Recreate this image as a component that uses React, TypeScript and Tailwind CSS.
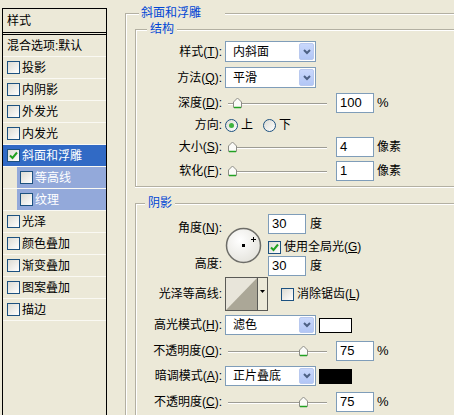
import React from 'react'

const Check = () => (
  <svg width="9" height="9" viewBox="0 0 9 9">
    <path d="M1 4.5 L3.5 7 L8 1.5" fill="none" stroke="#21a121" strokeWidth="2" />
  </svg>
)

const CheckBox = ({ checked = false }: { checked?: boolean }) => (
  <div className="w-[13px] h-[13px] shrink-0 border border-[#1c5180] bg-gradient-to-br from-[#dcdbd3] to-white flex items-center justify-center">
    {checked && <Check />}
  </div>
)

const Radio = ({ checked = false }: { checked?: boolean }) => (
  <div className="w-[13px] h-[13px] shrink-0 rounded-full border border-[#1c5180] bg-gradient-to-br from-[#dcdbd3] to-white flex items-center justify-center">
    {checked && <div className="w-[5px] h-[5px] rounded-full bg-[#3fb33f]" />}
  </div>
)

const Select = ({ value }: { value: string }) => (
  <div className="w-[91px] h-full border border-[#7f9db9] bg-white flex items-center">
    <span className="pl-[7px]">{value}</span>
    <div className="ml-auto mr-[1px] w-[15px] h-[calc(100%-2px)] rounded-[2px] border border-[#b9c9ef] bg-gradient-to-b from-[#c9d8fc] to-[#b2c6f5] flex items-center justify-center">
      <svg width="8" height="6" viewBox="0 0 8 6">
        <path d="M1 1 L4 4 L7 1" fill="none" stroke="#4d6185" strokeWidth="2" />
      </svg>
    </div>
  </div>
)

const NumInput = ({ value }: { value: string }) => (
  <div className="w-[38px] h-full border border-[#7f9db9] bg-white flex items-center pl-[3px] text-[13px]">
    {value}
  </div>
)

const Slider = ({ left }: { left: number }) => (
  <div className="relative w-[105px] h-[12px]">
    <div className="absolute left-[3px] right-[3px] top-[6px] h-[1px] bg-[#9d9c94] shadow-[0_1px_0_#fff]" />
    <svg className="absolute top-0" style={{ left }} width="11" height="12" viewBox="0 0 11 12">
      <path d="M1.5 10.5 V5 L5.5 1 L9.5 5 V10.5 Z" fill="#fbfbf8" stroke="#8d8d86" />
      <path d="M2 10.5 H9" stroke="#21a121" strokeWidth="1.5" />
    </svg>
  </div>
)

const Label = ({ children }: { children: React.ReactNode }) => (
  <div className="w-[86px] shrink-0 text-right whitespace-nowrap">{children}</div>
)

const U = ({ children }: { children: React.ReactNode }) => <span className="underline">{children}</span>

const Row = ({ label, className, children }: { label: React.ReactNode; className: string; children: React.ReactNode }) => (
  <div className={`flex items-center ${className}`}>
    <Label>{label}</Label>
    <div className="ml-[3px] h-full flex items-center">{children}</div>
  </div>
)

const items = ['投影', '内阴影', '外发光', '内发光']
const after = ['光泽', '颜色叠加', '渐变叠加', '图案叠加', '描边']

const LeftPanel = () => (
  <div className="ml-[2px] mt-[8px] w-[105px] h-[420px] shrink-0 border-x border-t border-black">
    <div className="h-[26px] border-b-[3px] border-double border-black flex items-center pl-[4px]">样式</div>
    <div className="h-[22px] border-b border-[#faf9f3] flex items-center pl-[4px]">混合选项:默认</div>
    {items.map((t) => (
      <div key={t} className="h-[22px] border-b border-[#faf9f3] flex items-center pl-[4px] gap-[2px]">
        <CheckBox />
        <span>{t}</span>
      </div>
    ))}
    <div className="h-[22px] border-b border-[#faf9f3] flex items-center pl-[4px] gap-[2px] bg-[#316ac5] text-white">
      <CheckBox checked />
      <span>斜面和浮雕</span>
    </div>
    {['等高线', '纹理'].map((t) => (
      <div key={t} className="h-[22px] border-b border-[#faf9f3] flex">
        <div className="w-[14px]" />
        <div className="flex-1 flex items-center pl-[3px] gap-[2px] bg-[#93a9da] text-white">
          <CheckBox />
          <span>{t}</span>
        </div>
      </div>
    ))}
    {after.map((t) => (
      <div key={t} className="h-[22px] border-b border-[#faf9f3] flex items-center pl-[4px] gap-[2px]">
        <CheckBox />
        <span>{t}</span>
      </div>
    ))}
  </div>
)

const Dial = () => (
  <svg width="37" height="37" viewBox="0 0 37 37">
    <defs>
      <radialGradient id="dg" cx="0.4" cy="0.35" r="0.7">
        <stop offset="0" stopColor="#ffffff" />
        <stop offset="1" stopColor="#e4e3dc" />
      </radialGradient>
    </defs>
    <circle cx="18.5" cy="18.5" r="17" fill="url(#dg)" stroke="#6d6d68" strokeWidth="1.5" />
    <rect x="17" y="17" width="3" height="3" fill="#000" />
    <path d="M28.5 10 V15 M26 12.5 H31" stroke="#000" strokeWidth="1" />
  </svg>
)

const Contour = () => (
  <div className="w-[43px] h-[34px] border border-[#5a5a56] bg-[#ece9d8] flex">
    <svg width="31" height="32" viewBox="0 0 31 32" className="shrink-0">
      <rect width="31" height="32" fill="#e8e5da" />
      <path d="M0 32 L31 0 V32 Z" fill="#aba797" />
    </svg>
    <div className="flex-1 border-l border-[#5a5a56] flex items-start justify-center pt-[12px]">
      <svg width="5" height="3" viewBox="0 0 5 3">
        <path d="M0 0 H5 L2.5 3 Z" fill="#000" />
      </svg>
    </div>
  </div>
)

const Swatch = ({ color }: { color: string }) => (
  <div className={`ml-[3px] w-[33px] h-[15px] border border-black ${color}`} />
)

export default function App() {
  return (
    <div className="w-[454px] h-[415px] overflow-hidden bg-[#ece9d8] flex text-[12px] leading-[16px] text-black font-['Liberation_Sans','Noto_Sans_CJK_SC',sans-serif]">
      <LeftPanel />
      <div className="relative ml-[18px] mt-[13px] w-[360px] h-[440px] shrink-0 border-l border-t border-[#b3b0a2] shadow-[inset_1px_1px_0_#fff] pl-[9px] pt-[15px]">
        <div className="absolute left-[13px] -top-[9px] pl-[2px] pr-[24px] bg-[#ece9d8] text-[#0046d5]">斜面和浮雕</div>

        {/* 结构 */}
        <div className="relative h-[158px] border border-r-0 border-[#b3b0a2] shadow-[inset_1px_1px_0_#fff,0_1px_0_#fff] pt-[11px]">
          <div className="absolute left-[11px] -top-[9px] px-[3px] bg-[#ece9d8] text-[#0046d5]">结构</div>
          <Row label={<>样式(<U>T</U>):</>} className="h-[21px]">
            <Select value="内斜面" />
          </Row>
          <Row label={<>方法(<U>Q</U>):</>} className="h-[21px] mt-[5px]">
            <Select value="平滑" />
          </Row>
          <Row label={<>深度(<U>D</U>):</>} className="h-[20px] mt-[5px]">
            <Slider left={7} />
            <div className="ml-[6px] h-full"><NumInput value="100" /></div>
            <span className="ml-[3px] text-[13px]">%</span>
          </Row>
          <Row label="方向:" className="h-[18px] mt-[3px]">
            <Radio checked />
            <span className="ml-[3px]">上</span>
            <div className="ml-[10px]"><Radio /></div>
            <span className="ml-[3px]">下</span>
          </Row>
          <Row label={<>大小(<U>S</U>):</>} className="h-[20px] mt-[3px]">
            <Slider left={2} />
            <div className="ml-[6px] h-full"><NumInput value="4" /></div>
            <span className="ml-[3px]">像素</span>
          </Row>
          <Row label={<>软化(<U>F</U>):</>} className="h-[20px] mt-[4px]">
            <Slider left={2} />
            <div className="ml-[6px] h-full"><NumInput value="1" /></div>
            <span className="ml-[3px]">像素</span>
          </Row>
        </div>

        {/* 阴影 */}
        <div className="relative mt-[16px] h-[240px] border-l border-t border-[#b3b0a2] shadow-[inset_1px_1px_0_#fff]">
          <div className="absolute left-[9px] -top-[9px] px-[3px] bg-[#ece9d8] text-[#0046d5]">阴影</div>
          <div className="flex items-start">
            <div className="flex flex-col pt-[16px]">
              <Label>角度(<U>N</U>):</Label>
              <div className="mt-[20px]"><Label>高度:</Label></div>
            </div>
            <div className="ml-[3px] mt-[23px]"><Dial /></div>
            <div className="ml-[6px] pt-[10px] flex flex-col">
              <div className="h-[20px] flex items-center">
                <NumInput value="30" />
                <span className="ml-[4px]">度</span>
              </div>
              <div className="h-[14px] mt-[6px] flex items-center">
                <CheckBox checked />
                <span className="ml-[3px] whitespace-nowrap">使用全局光(<U>G</U>)</span>
              </div>
              <div className="h-[20px] mt-[2px] flex items-center">
                <NumInput value="30" />
                <span className="ml-[4px]">度</span>
              </div>
            </div>
          </div>
          <Row label="光泽等高线:" className="h-[34px] mt-[1px]">
            <Contour />
            <div className="ml-[13px]"><CheckBox /></div>
            <span className="ml-[3px] whitespace-nowrap">消除锯齿(<U>L</U>)</span>
          </Row>
          <Row label={<>高光模式(<U>H</U>):</>} className="h-[20px] mt-[4px]">
            <Select value="滤色" />
            <Swatch color="bg-white" />
          </Row>
          <Row label={<>不透明度(<U>O</U>):</>} className="h-[20px] mt-[6px]">
            <Slider left={73} />
            <div className="ml-[6px] h-full"><NumInput value="75" /></div>
            <span className="ml-[3px] text-[13px]">%</span>
          </Row>
          <Row label={<>暗调模式(<U>A</U>):</>} className="h-[20px] mt-[5px]">
            <Select value="正片叠底" />
            <Swatch color="bg-black" />
          </Row>
          <Row label={<>不透明度(<U>C</U>):</>} className="h-[20px] mt-[6px]">
            <Slider left={73} />
            <div className="ml-[6px] h-full"><NumInput value="75" /></div>
            <span className="ml-[3px] text-[13px]">%</span>
          </Row>
        </div>
      </div>
    </div>
  )
}
